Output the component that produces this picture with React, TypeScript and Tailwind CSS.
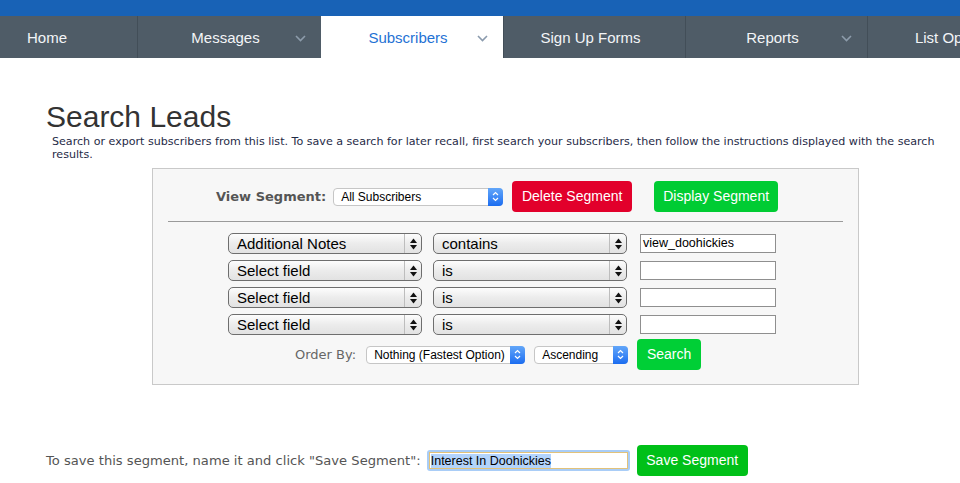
import React from 'react';

const helv = { fontFamily: '"Liberation Sans", Arial, sans-serif' };
const verd = { fontFamily: '"DejaVu Sans", Verdana, sans-serif' };

const Chevron = ({ color = '#8d9cab' }: { color?: string }) => (
    <svg width="11" height="7" viewBox="0 0 11 7" className="absolute right-[15px] top-[19px]">
        <polyline points="1,1 5.5,5.5 10,1" fill="none" stroke={color} strokeWidth="1.6" />
    </svg>
);

const navItems = [
    { label: 'Home', w: 'w-[137px]', chevron: false, left: true },
    { label: 'Messages', w: 'w-[184px]', chevron: true },
    { label: 'Subscribers', w: 'w-[182px]', chevron: true, active: true },
    { label: 'Sign Up Forms', w: 'w-[182px]', chevron: false },
    { label: 'Reports', w: 'w-[182px]', chevron: true },
    { label: 'List Options', w: 'w-[182px]', chevron: true },
];

// mac style grey popup with the black up/down arrows
const GraySelect = ({ value, w }: { value: string; w: string }) => (
    <div className={`${w} h-[21px] flex items-center rounded-[5px] border border-[#6e6e6e] bg-linear-to-b from-[#fdfdfd] via-[#ececec] to-[#e2e2e2]`}>
        <span className="flex-1 pl-[8px] text-[15px] text-black leading-none" style={helv}>{value}</span>
        <div className="w-[17px] h-full border-l border-[#bdbdbd] flex items-center justify-center">
            <svg width="7" height="12" viewBox="0 0 7 12">
                <polygon points="3.5,0.5 7,5 0,5" fill="#111" />
                <polygon points="0,7 7,7 3.5,11.5" fill="#111" />
            </svg>
        </div>
    </div>
);

// white popup with the blue stepper end
const BlueSelect = ({ value, w }: { value: string; w: string }) => (
    <div className={`${w} h-[18px] flex items-center rounded-[4px] border border-[#c6c6c6] bg-white`}>
        <span className="flex-1 pl-[7px] text-[12px] text-black leading-none" style={helv}>{value}</span>
        <div className="w-[15px] h-[18px] -mr-px rounded-r-[4px] bg-linear-to-b from-[#62a6f9] to-[#1a6cf0] flex items-center justify-center">
            <svg width="7" height="11" viewBox="0 0 7 11">
                <polyline points="1,4 3.5,1.5 6,4" fill="none" stroke="#fff" strokeWidth="1.2" />
                <polyline points="1,7 3.5,9.5 6,7" fill="none" stroke="#fff" strokeWidth="1.2" />
            </svg>
        </div>
    </div>
);

const TextBox = ({ value = '' }: { value?: string }) => (
    <div className="w-[136px] h-[19px] border border-[#8f8f8f] bg-white flex items-center pl-[2px] text-[12.5px] text-black" style={helv}>
        {value}
    </div>
);

const Btn = ({ label, color, w }: { label: string; color: string; w: string }) => (
    <div className={`${w} h-[31px] rounded-[4px] ${color} flex items-center justify-center text-white text-[14px]`} style={helv}>
        {label}
    </div>
);

const conditions = [
    { field: 'Additional Notes', op: 'contains', value: 'view_doohickies' },
    { field: 'Select field', op: 'is', value: '' },
    { field: 'Select field', op: 'is', value: '' },
    { field: 'Select field', op: 'is', value: '' },
];

export default function App() {
    return (
        <div className="w-[960px] h-[483px] overflow-hidden bg-white">
            <div className="h-[16px] bg-[#1862b6]" />
            <nav className="h-[42px] flex bg-[#4f5c67] whitespace-nowrap overflow-hidden">
                {navItems.map((item, i) => (
                    <div
                        key={item.label}
                        className={`${item.w} shrink-0 relative h-full flex items-center pt-[2px] text-[15px] ${i > 0 ? 'border-l border-[#424e58]' : ''} ${item.left ? 'pl-[27px]' : 'justify-center pr-[8px]'} ${item.active ? 'bg-white text-[#1f72d4] border-l-0' : 'text-[#f3f5f7]'}`}
                        style={helv}
                    >
                        {item.label}
                        {item.chevron && <Chevron color={item.active ? '#8a9aad' : '#8d9cab'} />}
                    </div>
                ))}
            </nav>

            <h1 className="ml-[46px] mt-[44px] text-[30px] leading-[30px] text-[#333]" style={helv}>Search Leads</h1>
            <p className="ml-[52px] mt-[3px] w-[890px] text-[11.1px] leading-[13px] text-[#1f2b47]" style={verd}>
                Search or export subscribers from this list. To save a search for later recall, first search your subscribers, then follow the instructions displayed with the search results.
            </p>

            <div className="ml-[152px] mt-[7px] w-[707px] h-[217px] border border-[#c9c9c9] bg-[#f7f7f7] px-[15px] pt-[12px]">
                <div className="flex items-center h-[31px]">
                    <span className="ml-[48px] text-[13px] font-bold text-[#555]" style={verd}>View Segment:</span>
                    <div className="ml-[7px]"><BlueSelect value="All Subscribers" w="w-[170px]" /></div>
                    <div className="ml-[9px]"><Btn label="Delete Segment" color="bg-[#e2002b]" w="w-[120px]" /></div>
                    <div className="ml-[22px]"><Btn label="Display Segment" color="bg-[#00cc33]" w="w-[124px]" /></div>
                </div>
                <div className="mt-[9px] h-px bg-[#9a9a9a]" />

                <div className="mt-[11px] ml-[60px] flex flex-col gap-[6px]">
                    {conditions.map((c, i) => (
                        <div key={i} className="flex items-center">
                            <GraySelect value={c.field} w="w-[194px]" />
                            <div className="ml-[11px]"><GraySelect value={c.op} w="w-[194px]" /></div>
                            <div className="ml-[13px]"><TextBox value={c.value} /></div>
                        </div>
                    ))}
                </div>

                <div className="mt-[4px] flex items-center h-[31px]">
                    <span className="ml-[127px] text-[13px] text-[#666]" style={verd}>Order By:</span>
                    <div className="ml-[10px]"><BlueSelect value="Nothing (Fastest Option)" w="w-[159px]" /></div>
                    <div className="ml-[9px]"><BlueSelect value="Ascending" w="w-[94px]" /></div>
                    <div className="ml-[9px]"><Btn label="Search" color="bg-[#00cf36]" w="w-[64px]" /></div>
                </div>
            </div>

            <div className="mt-[60px] ml-[46px] flex items-center h-[31px]">
                <span className="text-[13.1px] text-[#555]" style={verd}>To save this segment, name it and click "Save Segment":</span>
                <div className="ml-[6px] w-[203px] h-[21px] rounded-[3px] bg-[#a9cdf7] p-[2px]">
                    <div className="w-full h-full border border-[#e2c27a] bg-white flex items-center pl-[1px]">
                        <span className="bg-[#b3d4fc] text-[12.5px] text-black leading-[14px]" style={helv}>Interest In Doohickies</span>
                    </div>
                </div>
                <div className="ml-[7px]"><Btn label="Save Segment" color="bg-[#00c018]" w="w-[111px]" /></div>
            </div>
        </div>
    );
}
